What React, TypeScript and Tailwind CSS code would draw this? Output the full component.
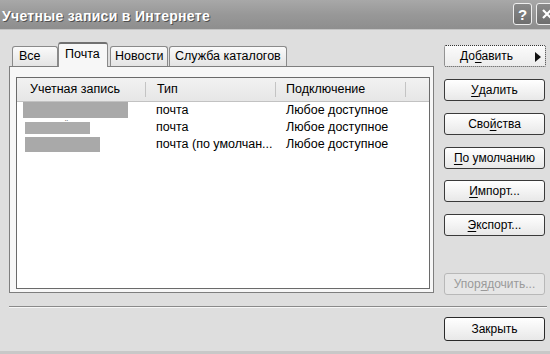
import React from "react";

const font = { fontFamily: '"Liberation Sans", Arial, sans-serif' };

function Btn({
  children,
  disabled,
  className = "",
}: {
  children: React.ReactNode;
  disabled?: boolean;
  className?: string;
}) {
  return (
    <div
      className={
        "h-[22px] w-[101px] rounded-[3px] border flex items-center justify-center text-[12px] leading-none " +
        (disabled
          ? "border-[#b8b8b8] bg-[#e6e6e6] text-[#9a9a9a] "
          : "border-[#3a3a3a] bg-gradient-to-b from-[#ffffff] to-[#e8e8e8] text-black ") +
        className
      }
    >
      {children}
    </div>
  );
}

function U({ children }: { children: React.ReactNode }) {
  return <span className="underline underline-offset-2">{children}</span>;
}

export default function App() {
  return (
    <div
      className="w-[550px] h-[354px] overflow-hidden flex flex-col bg-[#dedede] text-black"
      style={font}
    >
      {/* Title bar */}
      <div className="h-[29px] shrink-0 bg-gradient-to-b from-[#a8a8a8] via-[#989898] to-[#8e8e8e] flex items-start relative">
        <div
          className="pl-[2px] pt-[9px] text-[14px] font-bold text-white leading-none tracking-[0.3px]"
          style={{ textShadow: "1px 1px 0 #505050" }}
        >
          Учетные записи в Интернете
        </div>
        <div className="ml-auto flex gap-[4px] pt-[3px] -mr-[8px]">
          <div className="w-[19px] h-[22px] rounded-[3px] border border-[#eeeeee] bg-gradient-to-b from-[#8a8a8a] to-[#6e6e6e] flex items-center justify-center text-white text-[15px] font-bold leading-none">
            ?
          </div>
          <div className="w-[22px] h-[22px] rounded-[3px] border border-[#eeeeee] bg-gradient-to-b from-[#8a8a8a] to-[#6e6e6e] flex items-center justify-center">
            <svg width="12" height="12" viewBox="0 0 12 12">
              <path d="M2 2 L10 10 M10 2 L2 10" stroke="white" strokeWidth="2.2" />
            </svg>
          </div>
        </div>
      </div>
      <div className="h-[1px] bg-[#c4c4c4]" />

      {/* Body */}
      <div className="flex-1 flex flex-col pl-[9px]">
        <div className="flex">
          {/* Left: tabs + panel */}
          <div className="w-[425px] pt-[12px] flex flex-col">
            <div className="h-[24px] flex items-end pl-[3px] relative z-10 text-[12.5px] leading-none">
              <div className="w-[46px] h-[20px] border border-b-0 border-[#8a8a8a] rounded-t-[3px] bg-gradient-to-b from-[#fafafa] to-[#e4e4e4] flex items-center pl-[6px]">
                Все
              </div>
              <div className="w-[50px] h-[25px] -mb-[1px] border border-b-0 border-[#8a8a8a] border-t-[2px] border-t-[#707070] rounded-t-[3px] bg-[#f7f7f7] flex items-center pl-[6px] pb-[2px]">
                Почта
              </div>
              <div className="w-[58px] h-[20px] ml-[2px] border border-b-0 border-[#8a8a8a] rounded-t-[3px] bg-gradient-to-b from-[#fafafa] to-[#e4e4e4] flex items-center pl-[4px]">
                Новости
              </div>
              <div className="w-[118px] h-[20px] ml-[1px] border border-b-0 border-[#8a8a8a] rounded-t-[3px] bg-gradient-to-b from-[#fafafa] to-[#e4e4e4] flex items-center pl-[5px]">
                Служба каталогов
              </div>
            </div>
            <div className="h-[227px] border border-[#7e7e7e] bg-[#f7f7f7] pl-[6px] pr-[3px] pt-[10px] pb-[3px]">
              <div className="h-full border border-[#6a6a6a] bg-white flex flex-col text-[12.5px] leading-none">
                {/* header */}
                <div className="h-[24px] shrink-0 flex bg-gradient-to-b from-[#f2f2f2] to-[#e6e6e6] border-b border-[#c2c2c2]">
                  <div className="w-[129px] flex items-center pl-[13px] border-r border-[#c4c4c4] my-[4px]">
                    Учетная запись
                  </div>
                  <div className="w-[130px] flex items-center pl-[11px] border-r border-[#c4c4c4] my-[4px]">
                    Тип
                  </div>
                  <div className="w-[130px] flex items-center pl-[10px] border-r border-[#c4c4c4] my-[4px]">
                    Подключение
                  </div>
                </div>
                {/* rows */}
                <div className="h-[17px] flex items-center">
                  <div className="w-[129px] h-full flex items-start pl-[6px]">
                    <div className="w-[105px] h-[16px] bg-[#a9a9a9]" />
                  </div>
                  <div className="w-[130px] pl-[10px]">почта</div>
                  <div className="w-[130px] pl-[10px]">Любое доступное</div>
                </div>
                <div className="h-[17px] flex items-center">
                  <div className="w-[129px] h-full flex items-end pl-[8px] pb-[2px] relative">
                    <div className="w-[65px] h-[12px] bg-[#acacac]" />
                    <div className="absolute left-[48px] top-[0px] text-[9px] text-[#777]">¨</div>
                  </div>
                  <div className="w-[130px] pl-[10px]">почта</div>
                  <div className="w-[130px] pl-[10px]">Любое доступное</div>
                </div>
                <div className="h-[17px] flex items-center">
                  <div className="w-[129px] h-full flex items-center pl-[8px]">
                    <div className="w-[75px] h-[15px] bg-[#a9a9a9]" />
                  </div>
                  <div className="w-[130px] pl-[10px] whitespace-nowrap">почта (по умолчан...</div>
                  <div className="w-[130px] pl-[10px]">Любое доступное</div>
                </div>
              </div>
            </div>
          </div>

          {/* Right: buttons */}
          <div className="ml-[10px] pt-[15px] flex flex-col gap-[12px]">
            <div className="h-[22px] w-[102px] border border-dotted border-[#333] rounded-[2px] bg-gradient-to-b from-[#fbfbfb] to-[#ececec] flex items-center text-[12px] leading-none relative">
              <span className="ml-[15px]">
                До<U>б</U>авить
              </span>
              <svg className="absolute right-[4px] top-[6px]" width="6" height="10" viewBox="0 0 6 10">
                <path d="M0 0 L6 5 L0 10 Z" fill="#111" />
              </svg>
            </div>
            <Btn>
              <U>У</U>далить
            </Btn>
            <Btn>
              Сво<U>й</U>ства
            </Btn>
            <Btn>
              <U>П</U>о умолчанию
            </Btn>
            <Btn className="-mt-[1px]">
              <U>И</U>мпорт...
            </Btn>
            <Btn>
              <U>Э</U>кспорт...
            </Btn>
            <Btn disabled className="mt-[25px] w-[95px]">
              Упор<U>я</U>дочить...
            </Btn>
          </div>
        </div>

        {/* separator */}
        <div className="mt-[11px] w-[538px] h-[1px] bg-[#8a8a8a]" />
        <div className="w-[538px] h-[1px] bg-[#f6f6f6]" />

        <div className="flex justify-end pr-[5px] mt-[9px]">
          <div className="h-[24px] w-[101px] rounded-[3px] border-[1.5px] border-[#2a2a2a] bg-gradient-to-b from-[#ffffff] to-[#e8e8e8] flex items-center justify-center text-[12px] leading-none">
            Закрыть
          </div>
        </div>
        <div className="mt-auto h-[3px] bg-[#c8c8c8] -ml-[9px]" />
      </div>
    </div>
  );
}
